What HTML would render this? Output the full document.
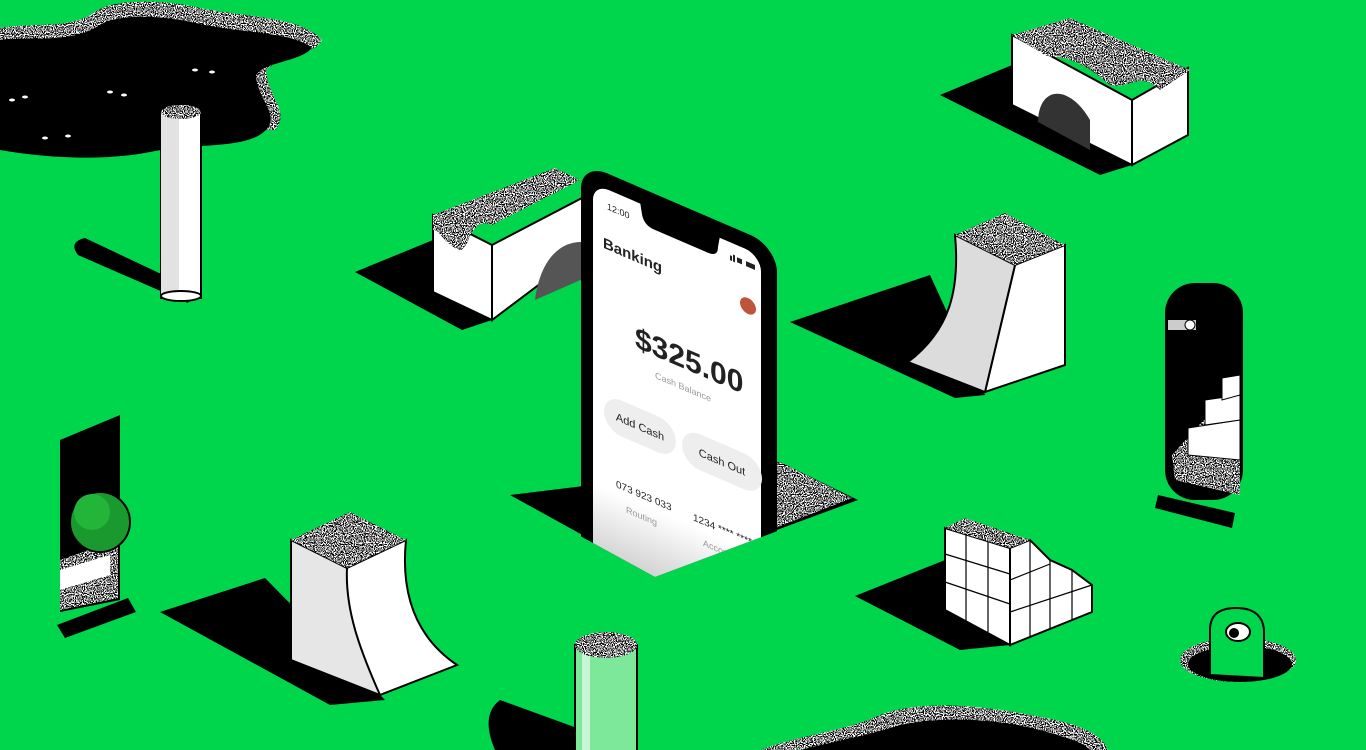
<!DOCTYPE html>
<html><head><meta charset="utf-8"><style>
html,body{margin:0;padding:0;width:1366px;height:750px;overflow:hidden;background:#00D64B}
svg{display:block}
text{font-family:"Liberation Sans",sans-serif}
</style></head><body>
<svg width="1366" height="750" viewBox="0 0 1366 750" xmlns="http://www.w3.org/2000/svg">
<defs>
<filter id="nz" x="0" y="0" width="100%" height="100%">
<feTurbulence type="fractalNoise" baseFrequency="0.9" numOctaves="1" seed="3" result="t"/>
<feColorMatrix in="t" type="matrix" values="0 0 0 1 0  0 0 0 1 0  0 0 0 1 0  0 0 0 0 1" result="g"/>
<feComponentTransfer in="g" result="b"><feFuncR type="discrete" tableValues="0 1"/><feFuncG type="discrete" tableValues="0 1"/><feFuncB type="discrete" tableValues="0 1"/><feFuncA type="linear" slope="0" intercept="1"/></feComponentTransfer>
<feComposite in="b" in2="SourceGraphic" operator="in"/>
</filter>
<linearGradient id="sg" x1="0" y1="0" x2="0" y2="1"><stop offset="0.75" stop-color="#fff"/><stop offset="1" stop-color="#bdbdbd"/></linearGradient>
<clipPath id="pc"><polygon points="500,0 900,0 900,485 655,577 500,492"/></clipPath>
</defs>

<!-- top-left blob -->
<path filter="url(#nz)" fill="#000" d="M0,28 C30,22 70,30 95,12 C110,0 160,-2 200,8 C250,18 300,16 322,40 C312,58 270,58 266,72 C270,100 290,112 275,130 L0,130Z"/>
<path fill="#000" d="M0,40 C30,36 70,44 98,26 C115,14 160,14 200,24 C250,34 292,32 312,48 C300,62 262,62 256,76 C258,100 280,114 266,130 C246,150 200,142 150,152 C100,162 40,157 0,150 Z"/>
<g fill="#fff"><ellipse cx="45" cy="138" rx="3" ry="1.5"/><ellipse cx="68" cy="136" rx="3" ry="1.5"/><ellipse cx="12" cy="100" rx="3" ry="1.5"/><ellipse cx="25" cy="97" rx="3" ry="1.5"/><ellipse cx="110" cy="92" rx="3" ry="1.5"/><ellipse cx="124" cy="95" rx="3" ry="1.5"/><ellipse cx="195" cy="70" rx="3" ry="1.5"/><ellipse cx="212" cy="72" rx="3" ry="1.5"/></g>

<!-- pillar -->
<path d="M85,238 L195,290 L188,303 L78,255 Q68,242 85,238Z" fill="#000"/>
<rect x="161" y="112" width="40" height="186" fill="#fff" stroke="#000" stroke-width="2"/>
<rect x="161" y="112" width="18" height="186" fill="#e2e2e2"/>
<ellipse cx="181" cy="296" rx="20" ry="5" fill="#fff" stroke="#000" stroke-width="2"/>
<ellipse cx="181" cy="112" rx="20" ry="7" filter="url(#nz)" fill="#000"/>

<!-- left bridge -->
<polygon points="355,272 433,240 492,320 462,330" fill="#000"/>
<polygon points="492,245 582,198 585,250 492,320" fill="#fff" stroke="#000" stroke-width="2"/>
<polygon points="433,215 492,245 492,320 433,292" fill="#fff" stroke="#000" stroke-width="2"/>
<path d="M433,215 L555,168 L580,180 L492,225 C470,215 470,250 460,250 C445,245 440,230 433,230Z" filter="url(#nz)" fill="#000"/>
<path d="M535,300 C540,260 560,240 585,242 L585,278 Z" fill="#555"/>

<!-- right bridge -->
<polygon points="940,95 1012,65 1132,165 1100,175" fill="#000"/>
<polygon points="1132,100 1188,68 1188,135 1132,165" fill="#fff" stroke="#000" stroke-width="2"/>
<polygon points="1012,35 1132,100 1132,165 1012,105" fill="#fff" stroke="#000" stroke-width="2"/>
<path d="M1012,35 L1070,18 L1190,70 L1160,90 C1140,70 1130,90 1110,85 C1070,50 1055,60 1045,55 Z" filter="url(#nz)" fill="#000"/>
<path d="M1038,120 C1040,85 1070,85 1090,120 L1090,150 L1038,122Z" fill="#333"/>

<!-- center-right ramp -->
<polygon points="790,322 930,275 985,395 955,398" fill="#000"/>
<polygon points="1015,265 1065,245 1065,365 985,392" fill="#fff" stroke="#000" stroke-width="2"/>
<path d="M955,235 L1015,265 L985,392 L908,362 C950,330 960,290 955,235Z" fill="#dcdcdc" stroke="#000" stroke-width="2"/>
<polygon points="955,235 1005,213 1065,245 1015,265" filter="url(#nz)" fill="#000"/>

<!-- hole under phone -->
<polygon points="510,495 780,462 858,500 655,575" fill="#000"/>
<polygon points="760,468 780,462 852,498 770,530" filter="url(#nz)" fill="#000"/>

<!-- phone -->
<g clip-path="url(#pc)">
<g transform="matrix(1,0.43,0,1,590,180)">
<rect x="-9" y="-14" width="196" height="424" rx="26" fill="#000"/>
<rect x="3" y="2" width="168" height="400" rx="16" fill="url(#sg)"/>
<path d="M50,0 L52,12 Q54,22 64,22 L118,22 Q128,22 128,12 L130,0Z" fill="#000"/>
<text x="17" y="22" font-size="9" fill="#222">12:00</text>
<text x="13" y="62" font-size="15" font-weight="bold" fill="#222">Banking</text>
<rect x="140" y="15" width="2" height="5" fill="#222"/><rect x="143" y="13" width="2" height="7" fill="#222"/><rect x="147" y="14" width="5" height="5" fill="#222"/><rect x="156" y="14" width="9" height="5" fill="#222"/>
<circle cx="158" cy="58" r="8" fill="#c0533b"/>
<text x="45" y="148" font-size="30" font-weight="bold" fill="#222">$325.00</text>
<text x="65" y="170" font-size="9" fill="#999">Cash Balance</text>
<rect x="14" y="207" width="72" height="36" rx="18" fill="#eee"/>
<text x="50" y="229" font-size="11" text-anchor="middle" fill="#222">Add Cash</text>
<rect x="92" y="207" width="80" height="36" rx="18" fill="#eee"/>
<text x="132" y="229" font-size="11" text-anchor="middle" fill="#222">Cash Out</text>
<text x="26" y="296" font-size="10" fill="#222">073 923 033</text>
<text x="36" y="317" font-size="9" fill="#999">Routing</text>
<text x="103" y="296" font-size="10" fill="#222">1234 **** ****</text>
<text x="113" y="317" font-size="9" fill="#999">Account</text>
</g></g>

<!-- right door -->
<polygon points="1158,495 1235,513 1232,528 1155,508" fill="#000"/>
<rect x="1165" y="283" width="78" height="217" rx="30" fill="#000"/>
<path d="M1172,455 L1240,380 L1240,495 L1175,480Z" filter="url(#nz)" fill="#000"/>
<polygon points="1188,428 1240,420 1240,460 1188,455" fill="#fff" stroke="#000"/>
<polygon points="1205,400 1240,395 1240,420 1205,425" fill="#fff" stroke="#000"/>
<polygon points="1222,378 1240,375 1240,395 1222,400" fill="#fff" stroke="#000"/>
<rect x="1168" y="320" width="28" height="10" fill="#ccc"/><circle cx="1190" cy="325" r="5" fill="#fff" stroke="#000"/>

<!-- left door -->
<polygon points="57,625 128,598 136,612 65,638" fill="#000"/>
<polygon points="60,440 120,415 120,600 60,612" fill="#000"/>
<path d="M60,560 L118,540 L118,598 L60,610Z" filter="url(#nz)" fill="#000"/>
<polygon points="60,570 110,555 110,575 60,590" fill="#fff"/>
<circle cx="100" cy="522" r="30" fill="#1a9a2e" stroke="#000" stroke-width="2"/>
<circle cx="92" cy="512" r="18" fill="#22b53a"/>

<!-- bottom-left ramp -->
<polygon points="160,612 265,578 385,700 330,705" fill="#000"/>
<polygon points="291,540 347,568 380,695 291,660" fill="#e6e6e6" stroke="#000" stroke-width="2"/>
<path d="M347,568 L406,540 C400,600 420,640 457,665 L380,695 C360,650 345,610 347,568Z" fill="#fff" stroke="#000" stroke-width="2"/>
<polygon points="291,540 350,512 406,540 347,568" filter="url(#nz)" fill="#000"/>

<!-- cube stairs -->
<polygon points="855,596 945,560 1010,645 960,650" fill="#000"/>
<polygon points="945,528 1010,548 1010,645 945,610" fill="#fff" stroke="#000" stroke-width="2"/>
<polygon points="1010,548 1030,540 1050,560 1072,570 1092,585 1092,612 1010,645" fill="#fff" stroke="#000" stroke-width="2"/>
<g stroke="#000" stroke-width="1.2" fill="none"><path d="M945,554 L1010,574 M945,582 L1010,604 M966,535 L966,622 M988,542 L988,634 M1010,580 L1050,564 M1010,612 L1092,585 M1030,540 L1030,636 M1050,560 L1050,628 M1072,570 L1072,620"/></g>
<polygon points="945,528 965,518 1030,540 1010,548" filter="url(#nz)" fill="#000"/>

<!-- monster -->
<ellipse cx="1238" cy="660" rx="58" ry="22" filter="url(#nz)" fill="#000"/>
<ellipse cx="1240" cy="664" rx="52" ry="18" fill="#000"/>
<path d="M1210,675 L1210,630 Q1210,608 1236,608 Q1262,608 1264,630 L1264,678Z" fill="#00D64B" stroke="#000" stroke-width="2"/>
<ellipse cx="1238" cy="632" rx="12" ry="9" fill="#fff" stroke="#000" stroke-width="2"/>
<circle cx="1234" cy="633" r="5" fill="#000"/>

<!-- bottom cylinder -->
<path d="M500,700 L610,740 L600,750 L495,750 Q480,715 500,700Z" fill="#000"/>
<rect x="575" y="645" width="62" height="110" fill="#7de89a" stroke="#000" stroke-width="2"/>
<rect x="582" y="645" width="8" height="110" fill="#c8f5d3"/>
<ellipse cx="606" cy="645" rx="31" ry="13" filter="url(#nz)" fill="#000"/>

<!-- bottom blob -->
<path d="M760,750 C800,735 850,730 880,715 C920,700 980,705 1030,715 C1070,722 1100,730 1108,750Z" filter="url(#nz)" fill="#000"/>
<path d="M800,750 C840,740 870,735 900,725 C950,715 1000,720 1040,730 C1070,738 1085,744 1090,750Z" fill="#000"/>
</svg>
</body></html>
